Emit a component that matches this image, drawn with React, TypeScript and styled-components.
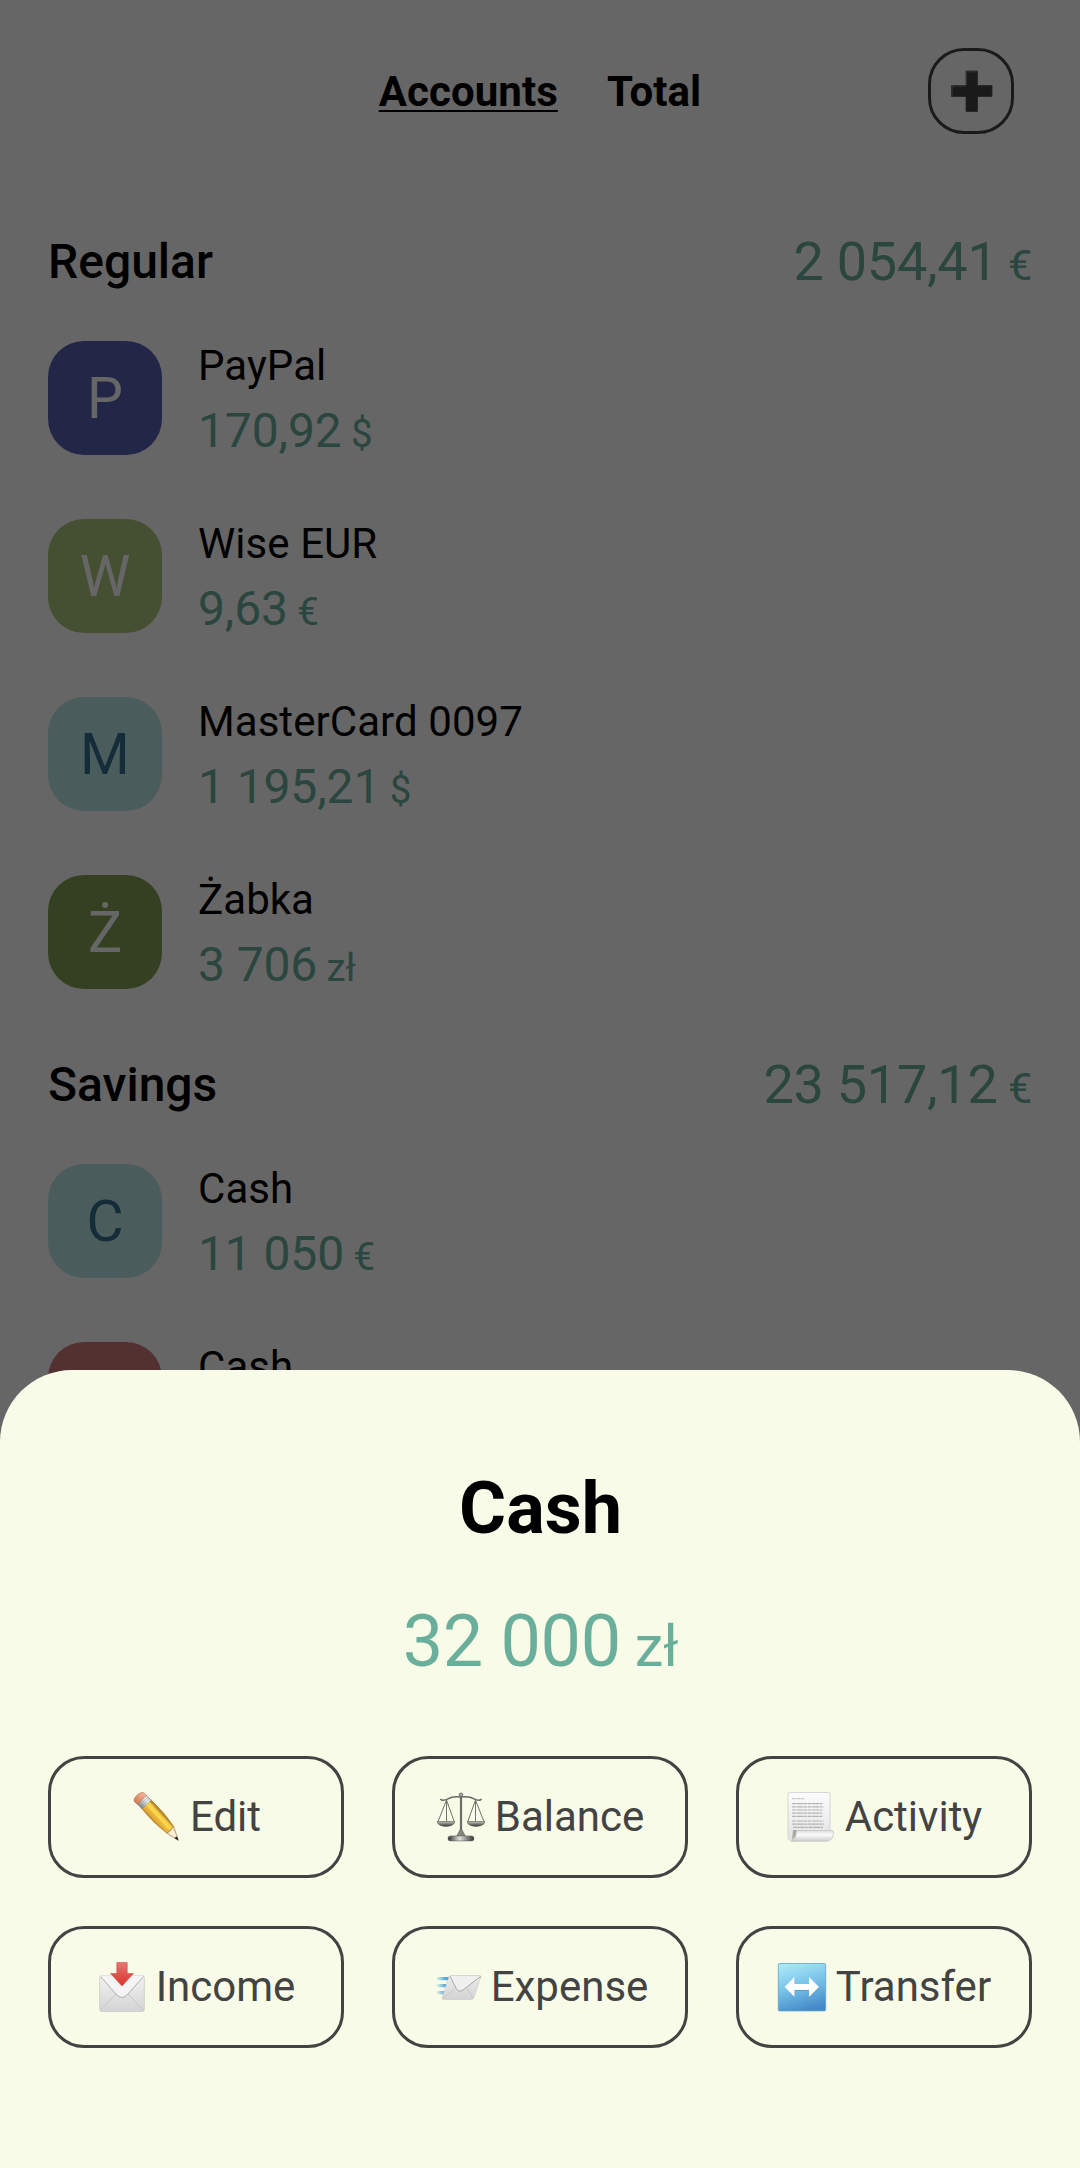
import React from "react";
import styled, { createGlobalStyle } from "styled-components";

const GlobalStyle = createGlobalStyle`
  * { box-sizing: border-box; }
  html, body { margin: 0; padding: 0; background: #fff; }
  body { font-family: Roboto, "Noto Sans", sans-serif; }
`;

const Screen = styled.div`
  position: relative;
  width: 1080px;
  height: 2168px;
  overflow: hidden;
  background: #fff;
`;

const Header = styled.header`
  display: grid;
  grid-template-columns: 86px 1fr 86px;
  align-items: center;
  height: 182px;
  padding: 0 66px;
`;

const Tabs = styled.nav`
  grid-column: 2;
  display: flex;
  justify-content: center;
  gap: 49px;
  padding: 2px 0 0;
`;

const Tab = styled.span<{ $active?: boolean }>`
  font-size: 42px;
  line-height: 50px;
  font-weight: 700;
  letter-spacing: 0.08px;
  color: #000;
  text-decoration: ${(p) => (p.$active ? "underline" : "none")};
  text-decoration-thickness: 2px;
  text-underline-offset: 4px;
`;

const AddButton = styled.button`
  display: flex;
  align-items: center;
  justify-content: center;
  width: 86px;
  height: 86px;
  padding: 0;
  border: 3px solid #434343;
  border-radius: 36px;
  background: none;
`;

const List = styled.main`
  display: flex;
  flex-direction: column;
  padding: 35px 48px 0;
`;

const SectionHead = styled.div`
  display: flex;
  align-items: flex-start;
  justify-content: space-between;
  height: 90px;
  line-height: 90px;
  margin-bottom: 34px;
`;

const SectionTitle = styled.h2`
  margin: 0;
  font-size: 48px;
  font-weight: 500;
  color: #000;
`;

const Amount = styled.span<{ $size: number }>`
  font-size: ${(p) => p.$size}px;
  letter-spacing: ${(p) => (p.$size > 48 ? "-0.0048em" : "-0.0025em")};
  color: #6aaf9b;
  white-space: pre;
`;

const Currency = styled.span`
  font-size: 0.8em;
`;

const AccountRow = styled.div`
  display: flex;
  gap: 36px;
  height: 114px;
  margin-bottom: 64px;
`;

const Rows = styled.section`
  display: flex;
  flex-direction: column;
  margin-bottom: -13px;
`;

const Avatar = styled.div<{ $bg: string; $fg: string }>`
  display: flex;
  align-items: center;
  justify-content: center;
  width: 114px;
  height: 114px;
  border-radius: 36px;
  background: ${(p) => p.$bg};
  color: ${(p) => p.$fg};
  font-size: 57px;
`;

const AccountText = styled.div`
  display: flex;
  flex-direction: column;
  gap: 8px;
`;

const AccountName = styled.span`
  font-size: 42px;
  line-height: 50px;
  letter-spacing: 0.06px;
  color: #000;
`;

const AmountLine = styled.div`
  line-height: 64px;
`;

const Backdrop = styled.div`
  position: absolute;
  inset: 0;
  background: rgba(0, 0, 0, 0.6);
`;

const Sheet = styled.section`
  position: absolute;
  left: 0;
  right: 0;
  bottom: 0;
  height: 798px;
  padding: 97px 48px 0;
  display: flex;
  flex-direction: column;
  align-items: center;
  border-radius: 72px 72px 0 0;
  background: #f8fbe7;
`;

const SheetTitle = styled.h1`
  margin: 0;
  padding-left: 1px;
  font-size: 72px;
  line-height: 84px;
  font-weight: 700;
  color: #000;
`;

const SheetAmount = styled.div`
  margin-top: 49px;
  padding-left: 1px;
  height: 84px;
  line-height: 84px;
`;

const Actions = styled.div`
  display: grid;
  grid-template-columns: repeat(3, 296px);
  gap: 48px;
  margin-top: 72px;
`;

const Action = styled.button`
  display: flex;
  align-items: center;
  justify-content: center;
  gap: 9px;
  height: 122px;
  padding: 0;
  border: 3px solid #434343;
  border-radius: 36px;
  background: none;
  font-family: inherit;
  font-size: 42px;
  line-height: 50px;
  color: #434343;
`;

const Icon = styled.svg`
  flex: none;
  width: 50px;
  height: 50px;
  overflow: visible;
`;

const PlusIcon = () => (
  <Icon viewBox="0 0 50 50">
    <path d="M20 5H31.5V19.5H46V30.5H31.5V45.5H20V30.5H5.5V19.5H20Z" fill="#434343" stroke="#565656" strokeWidth="0.8" />
    <path d="M20.5 19V5.8H31M6.2 30V20H20" fill="none" stroke="#828282" strokeWidth="1" />
  </Icon>
);

const PencilIcon = () => (
  <Icon viewBox="0 0 50 50">
    <defs>
      <linearGradient id="wood" gradientUnits="userSpaceOnUse" x1="16" y1="30" x2="27" y2="20">
        <stop offset="0" stopColor="#b87720" />
        <stop offset="0.3" stopColor="#cf9130" />
        <stop offset="0.34" stopColor="#dda436" />
        <stop offset="0.62" stopColor="#efbf40" />
        <stop offset="0.66" stopColor="#fbdc50" />
        <stop offset="0.9" stopColor="#f3cc42" />
        <stop offset="1" stopColor="#b98a2c" />
      </linearGradient>
      <linearGradient id="ferrule" gradientUnits="userSpaceOnUse" x1="7" y1="16" x2="18" y2="6">
        <stop offset="0" stopColor="#77797a" />
        <stop offset="0.35" stopColor="#b9bcbc" />
        <stop offset="0.7" stopColor="#f4f5f4" />
        <stop offset="1" stopColor="#a9abab" />
      </linearGradient>
      <linearGradient id="rubber" gradientUnits="userSpaceOnUse" x1="4" y1="12" x2="13" y2="3">
        <stop offset="0" stopColor="#d37b58" />
        <stop offset="1" stopColor="#f5b69b" />
      </linearGradient>
    </defs>
    <g transform="translate(2.2 0)">
      <path d="M8.5 16.5L17.5 7.5Q31 20 40.5 34.5L34 41.5Q20 31 8.5 16.5Z" fill="url(#wood)" stroke="#a8721f" strokeWidth="0.6" />
      <path d="M34 41.5Q35.5 38.5 37.5 38.5Q38.5 35.5 40.5 34.5L45.2 48.4Z" fill="#f6dcb6" stroke="#9c7344" strokeWidth="0.6" />
      <path d="M36.5 42L39 37L44 46Z" fill="#fff4e2" />
      <path d="M41.3 46.2Q42.5 44.5 44 44.5L45.3 48.6Z" fill="#252525" />
      <path d="M4.3 12.3L13 3.2L18 8L8.8 17Z" fill="url(#ferrule)" stroke="#858885" strokeWidth="0.5" />
      <path d="M5.8 13.8L14.8 5M7.3 15.4L16.5 6.5" stroke="#8b8d8c" strokeWidth="0.5" />
      <path d="M1 9.5Q0 6.5 3.5 3.5L6 1.5Q9-.5 11 1L13.2 3L4.3 12.5Z" fill="url(#rubber)" stroke="#b4694f" strokeWidth="0.5" />
    </g>
  </Icon>
);

const ScalesIcon = () => (
  <Icon viewBox="0 0 50 50">
    <defs>
      <linearGradient id="metal">
        <stop offset="0" stopColor="#333" />
        <stop offset="0.45" stopColor="#e0e0dc" />
        <stop offset="1" stopColor="#333" />
      </linearGradient>
      <linearGradient id="pan" x2="0" y2="1">
        <stop offset="0" stopColor="#c5c6bf" />
        <stop offset="1" stopColor="#333" />
      </linearGradient>
    </defs>
    <path d="M4.5 7C7 10.5 12 6.5 15 5.5Q19 4.5 25 5Q31 4.5 35 5.5C38 6.5 43 10.5 45.5 7" fill="none" stroke="#666962" strokeWidth="1.5" />
    <path d="M10.5 8L2.3 29M10.5 8V29M10.5 8L18 29M39.5 8L32 29M39.5 8V29M39.5 8L47.7 29" stroke="#73766e" strokeWidth="1" />
    <path d="M1 29.5H19C18 36 2 36 1 29.5ZM31 29.5H49C48 36 32 36 31 29.5Z" fill="url(#pan)" stroke="#54574f" strokeWidth="0.6" />
    <rect x="23.9" y="5" width="2.2" height="38" fill="#6d7068" />
    <circle cx="25" cy="2.8" r="1.8" fill="#a0a39b" stroke="#60635c" strokeWidth="0.8" />
    <path d="M25 36L29.5 44.5H20.5Z" fill="#85887f" stroke="#54574f" strokeWidth="0.6" />
    <rect x="12" y="43.9" width="26" height="5" rx="2.5" fill="url(#metal)" stroke="#54574f" strokeWidth="0.5" />
  </Icon>
);

const PageIcon = () => (
  <Icon viewBox="0 0 50 50">
    <defs>
      <linearGradient id="curl" x2="0" y2="1">
        <stop offset="0" stopColor="#dcdcdc" />
        <stop offset="0.4" stopColor="#fbfbfb" />
        <stop offset="1" stopColor="#cbcbcb" />
      </linearGradient>
      <linearGradient id="sheet" x2="0" y2="1">
        <stop offset="0" stopColor="#fcfcfc" />
        <stop offset="1" stopColor="#e2e2e2" />
      </linearGradient>
    </defs>
    <path d="M2 2Q2 .5 4 .5H42.5Q44 .5 44 2.5V42H10L7 49.3Q2 49 2 45Z" fill="url(#sheet)" stroke="#cdcec8" strokeWidth="0.8" />
    <path d="M6 6.7H19" stroke="#bbb" strokeWidth="0.9" strokeDasharray="3 .6 5 .5" />
    <path d="M6 11.6H37M6 14.8H37.5M6 18H37M6 21.2H36M6 24.4H37M6 29H37.5M6 32.2H38M7 35.4H37" stroke="#b4b4b4" strokeWidth="1.2" strokeDasharray="4 .5 7 .4 3 .6" />
    <path d="M7 38H11L9.5 44L6 48L6.5 43Z" fill="#a9a9a5" />
    <path d="M11.5 38.5H45.5Q48.3 38.5 47.5 42Q46 49.3 40.5 49.3H5.5Q10.5 48 10.3 40Q10.5 38.5 11.5 38.5Z" fill="url(#curl)" stroke="#c3c3bf" strokeWidth="0.7" />
  </Icon>
);

const InboxIcon = () => (
  <Icon viewBox="0 0 50 50">
    <defs>
      <linearGradient id="env" x2="0" y2="1">
        <stop offset="0" stopColor="#f2f2f2" />
        <stop offset="1" stopColor="#d4d4d6" />
      </linearGradient>
      <linearGradient id="redArrow" x2="0" y2="1">
        <stop offset="0" stopColor="#e57673" />
        <stop offset="1" stopColor="#dc322b" />
      </linearGradient>
    </defs>
    <rect x="2.7" y="13.5" width="44.6" height="36" rx="2.5" fill="url(#env)" stroke="#c8c9c4" strokeWidth="0.8" />
    <path d="M3.5 48.5L19 32M46.5 48.5L31 32" stroke="#c4c4c4" strokeWidth="0.9" />
    <path d="M3.5 14.5L19 32Q25 39 31 32L46.5 14.5Q46 13.5 44 13.5H6Q4 13.5 3.5 14.5Z" fill="#f4f4f4" />
    <path d="M3.5 14.5L19 32Q25 39 31 32L46.5 14.5" fill="none" stroke="#b0b1ab" strokeWidth="1" />
    <path d="M19.8 .5H30.2V11.5H36.5L25 24L13.5 11.5H19.8Z" fill="url(#redArrow)" stroke="#c9534c" strokeWidth="0.6" />
  </Icon>
);

const SendIcon = () => (
  <Icon viewBox="0 0 50 50">
    <defs>
      <linearGradient id="speed" gradientUnits="userSpaceOnUse" x1="0" x2="14" y1="0" y2="0">
        <stop offset="0" stopColor="#4aa5dc" stopOpacity="0" />
        <stop offset="0.55" stopColor="#55abdf" stopOpacity="0.85" />
        <stop offset="1" stopColor="#348fcc" />
      </linearGradient>
      <linearGradient id="mail" x2="0" y2="1">
        <stop offset="0" stopColor="#ededed" />
        <stop offset="1" stopColor="#d3d3d5" />
      </linearGradient>
    </defs>
    <g transform="translate(3.8 0)">
      <path d="M1 15H15V18.3H1ZM1 22H12.5V25.3H1ZM1 29H10V32.3H1Z" fill="url(#speed)" />
      <path d="M15 13.5H44Q45.5 13.5 45 15L38 35.5Q37.3 37.5 35.5 37.5H8Q6 37.5 6.5 35.5L13 15Q13.5 13.5 15 13.5Z" fill="url(#mail)" stroke="#cbccc7" strokeWidth="0.7" />
      <path d="M7 36.5L19 27M37.5 36.5L31 26" stroke="#c4c4c4" strokeWidth="0.8" />
      <path d="M14 14L20.5 26.5Q23.5 31.5 28.5 27L45 14.3" fill="#f0f0f0" stroke="#a9aaa3" strokeWidth="1" />
    </g>
  </Icon>
);

const TransferIcon = () => (
  <Icon viewBox="0 0 50 50">
    <defs>
      <linearGradient id="blue" x1="0.3" x2="0.6" y1="0" y2="1">
        <stop offset="0" stopColor="#a8e6f8" />
        <stop offset="0.5" stopColor="#74c0e8" />
        <stop offset="1" stopColor="#4488c8" />
      </linearGradient>
    </defs>
    <rect x="1.3" y="1.5" width="47.4" height="47.4" rx="1.5" fill="url(#blue)" stroke="#5fa3c8" strokeWidth="0.8" />
    <path d="M8 26L18 16V23H32V16L42 26L32 36V29H18V36Z" fill="#3979ac" opacity="0.4" />
    <path d="M7.5 25L17.5 15V22H32V15L42 25L32 35V28H17.5V35Z" fill="#fff" />
  </Icon>
);

type Account = { name: string; letter: string; value: string; currency: string; bg: string; fg: string };

const regular: Account[] = [
  { name: "PayPal", letter: "P", value: "170,92", currency: "$", bg: "#5562b2", fg: "#fff" },
  { name: "Wise EUR", letter: "W", value: "9,63", currency: "€", bg: "#acc57d", fg: "#fff" },
  { name: "MasterCard 0097", letter: "M", value: "1 195,21", currency: "$", bg: "#bce6e6", fg: "#35708e" },
  { name: "Żabka", letter: "Ż", value: "3 706", currency: "zł", bg: "#84a057", fg: "#fff" },
];

const savings: Account[] = [
  { name: "Cash", letter: "C", value: "11 050", currency: "€", bg: "#bce6e6", fg: "#35708e" },
  { name: "Cash", letter: "C", value: "32 000", currency: "zł", bg: "#d27b7b", fg: "#fff" },
];

const actions = [
  { label: "Edit", icon: <PencilIcon /> },
  { label: "Balance", icon: <ScalesIcon /> },
  { label: "Activity", icon: <PageIcon /> },
  { label: "Income", icon: <InboxIcon /> },
  { label: "Expense", icon: <SendIcon /> },
  { label: "Transfer", icon: <TransferIcon /> },
];

const Money = ({ value, currency, size }: { value: string; currency: string; size: number }) => (
  <Amount $size={size}>
    {value}
    <Currency>{" " + currency}</Currency>
  </Amount>
);

const Section = ({ title, total, accounts }: { title: string; total: string; accounts: Account[] }) => (
  <>
    <SectionHead>
      <SectionTitle>{title}</SectionTitle>
      <Money value={total} currency="€" size={54} />
    </SectionHead>
    <Rows>
      {accounts.map((a, i) => (
        <AccountRow key={i}>
          <Avatar $bg={a.bg} $fg={a.fg}>{a.letter}</Avatar>
          <AccountText>
            <AccountName>{a.name}</AccountName>
            <AmountLine>
              <Money value={a.value} currency={a.currency} size={48} />
            </AmountLine>
          </AccountText>
        </AccountRow>
      ))}
    </Rows>
  </>
);

export default function App() {
  return (
    <Screen>
      <GlobalStyle />
      <Header>
        <Tabs>
          <Tab $active>Accounts</Tab>
          <Tab>Total</Tab>
        </Tabs>
        <AddButton aria-label="Add">
          <PlusIcon />
        </AddButton>
      </Header>
      <List>
        <Section title="Regular" total="2 054,41" accounts={regular} />
        <Section title="Savings" total="23 517,12" accounts={savings} />
      </List>
      <Backdrop />
      <Sheet>
        <SheetTitle>Cash</SheetTitle>
        <SheetAmount>
          <Money value="32 000" currency="zł" size={72} />
        </SheetAmount>
        <Actions>
          {actions.map((a) => (
            <Action key={a.label}>
              {a.icon}
              {a.label}
            </Action>
          ))}
        </Actions>
      </Sheet>
    </Screen>
  );
}
